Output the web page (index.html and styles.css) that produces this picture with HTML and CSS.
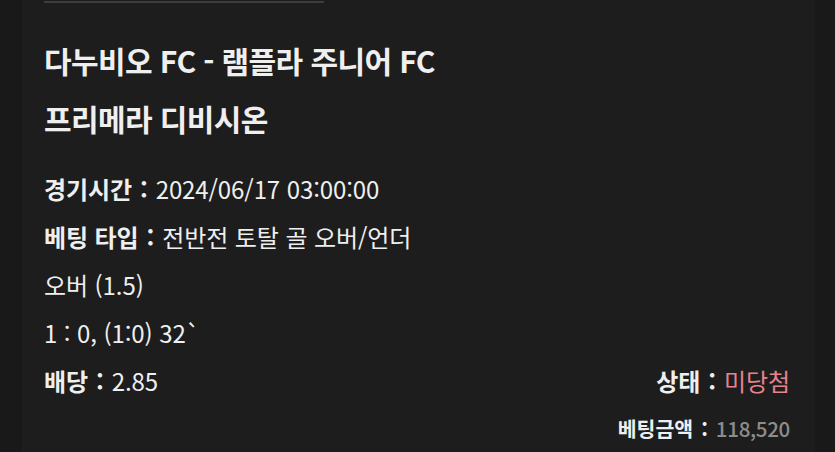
FILE: index.html
```html
<!DOCTYPE html>
<html lang="ko">
<head>
<meta charset="utf-8">
<link rel="stylesheet" href="styles.css">
</head>
<body>
<div class="panel">
  <div class="topline"></div>
  <div class="title">
    <div>다누비오 FC - 램플라 주니어 FC</div>
    <div>프리메라 디비시온</div>
  </div>
  <div class="info">
    <div class="row"><span class="label">경기시간</span><span class="colon">:</span><span>2024/06/17 03:00:00</span></div>
    <div class="row"><span class="label">베팅 타입</span><span class="colon">:</span><span>전반전 토탈 골 오버/언더</span></div>
    <div class="row"><span>오버 (1.5)</span></div>
    <div class="row"><span>1 : 0, (1:0) 32`</span></div>
    <div class="row split">
      <div><span class="label">배당</span><span class="colon">:</span><span>2.85</span></div>
      <div><span class="label">상태</span><span class="colon">:</span><span class="red">미당첨</span></div>
    </div>
    <div class="row right small"><span class="label">베팅금액</span><span class="colon">:</span><span class="grey">118,520</span></div>
  </div>
</div>
</body>
</html>
```
FILE: styles.css
```css
html, body {
  margin: 0;
  padding: 0;
  background: #191919;
  height: 100%;
}
body {
  font-family: "Noto Sans CJK KR", "Noto Sans", sans-serif;
  color: #efefef;
}
.panel {
  margin: 0 20px 0 22px;
  height: 452px;
  background: #1d1d1d;
  padding: 0 25px 0 22px;
  box-sizing: border-box;
  position: relative;
  overflow: hidden;
}
.topline {
  width: 280px;
  height: 2px;
  background: #3c3c3c;
  margin-top: 1px;
}
.title {
  margin-top: 28px;
  font-size: 30px;
  font-weight: 700;
  line-height: 58px;
  letter-spacing: -0.6px;
}
.info {
  margin-top: 18px;
  font-size: 24px;
  line-height: 48px;
  letter-spacing: -0.1px;
}
.label {
  font-weight: 700;
}
.colon {
  font-weight: 700;
  margin: 0 8px 0 8px;
}
.split {
  display: flex;
  justify-content: space-between;
}
.right {
  text-align: right;
}
.small {
  font-size: 20.5px;
  letter-spacing: 0;
  line-height: 46px;
}
.small .colon {
  margin: 0 8px;
}
.red {
  color: #e5838f;
}
.grey {
  color: #8c8c8c;
  font-weight: 500;
  letter-spacing: -0.3px;
}
```
